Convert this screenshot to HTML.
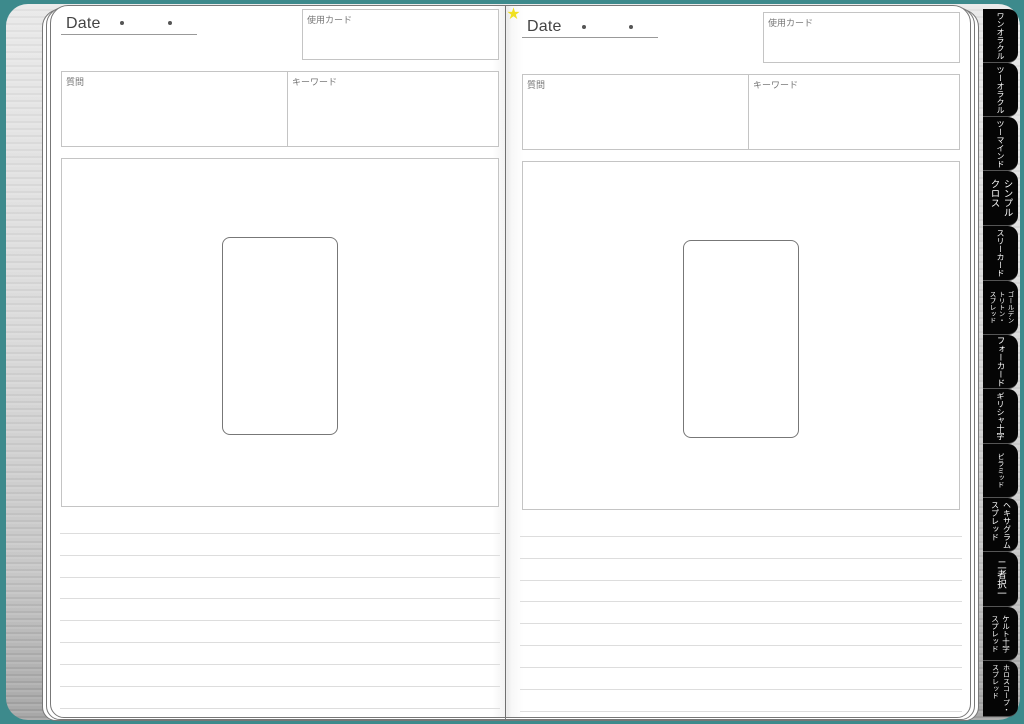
<!DOCTYPE html>
<html><head><meta charset="utf-8">
<style>
*{margin:0;padding:0;box-sizing:border-box}
body{width:1024px;height:724px;overflow:hidden;background:#3d8a8c;position:relative;font-family:"Liberation Sans","Noto Sans CJK JP",sans-serif}
.a{position:absolute}
.cover{left:6px;top:4px;width:1014px;height:716px;border-radius:22px;background:linear-gradient(180deg,#e8e8e8 0%,#d8d8d8 45%,#c2c2c2 80%,#a0a0a0 100%);}
.cover:after{content:"";position:absolute;inset:0;border-radius:22px;background:repeating-linear-gradient(0deg,rgba(255,255,255,.15) 0 2px,rgba(0,0,0,.03) 2px 4px,rgba(255,255,255,.08) 4px 7px)}
.edge{border:1px solid #777;background:#fff}
.box{border:1px solid #c4c4c4;background:#fff}
.lbl{font-size:9px;color:#777;position:absolute;left:4px;top:3px}
.date{font-size:16px;color:#444;letter-spacing:.2px}
.dl{height:1px;background:#999}
.card{border:1.3px solid #777;border-radius:8px;background:#fff}
.ln{height:1px;background:#ddd}
.tab{left:983px;width:35px;background:#050505;border-radius:0 10px 10px 0;color:#fff;writing-mode:vertical-rl;white-space:nowrap;font-size:8px;line-height:11px;display:flex;align-items:center;justify-content:center;border-bottom:1px solid #555}
.dot{width:4px;height:4px;border-radius:50%;background:#555}
</style></head><body>
<div class="a cover"></div>
<div class="a edge" style="left:42px;top:9px;width:470px;height:712px;border-radius:18px 0 0 14px"></div>
<div class="a edge" style="left:46px;top:7px;width:466px;height:713px;border-radius:18px 0 0 14px"></div>
<div class="a edge" style="left:50px;top:5px;width:462px;height:713px;border-radius:18px 0 0 14px"></div>
<div class="a edge" style="left:505px;top:9px;width:474px;height:712px;border-radius:0 18px 14px 0"></div>
<div class="a edge" style="left:505px;top:7px;width:470px;height:713px;border-radius:0 18px 14px 0"></div>
<div class="a edge" style="left:505px;top:5px;width:466px;height:713px;border-radius:0 18px 14px 0"></div>
<div class="a" style="left:492px;top:6px;width:32px;height:711px;background:linear-gradient(90deg,rgba(0,0,0,0) 0%,rgba(0,0,0,.05) 40%,rgba(0,0,0,.08) 50%,rgba(0,0,0,.03) 60%,rgba(0,0,0,0) 100%)"></div>
<div class="a" style="left:507px;top:3px;color:#f0e020;font-size:13px">★</div>

<div class="a date" style="left:66px;top:15px">Date</div>
<div class="a dot" style="left:120px;top:21px"></div>
<div class="a dot" style="left:168px;top:21px"></div>
<div class="a dl" style="left:61px;top:34px;width:136px"></div>
<div class="a box" style="left:302px;top:9px;width:197px;height:51px"><span class="lbl">使用カード</span></div>
<div class="a box" style="left:61px;top:71px;width:227px;height:76px"><span class="lbl">質問</span></div>
<div class="a box" style="left:287px;top:71px;width:212px;height:76px"><span class="lbl">キーワード</span></div>
<div class="a box" style="left:61px;top:158px;width:438px;height:349px"></div>
<div class="a card" style="left:222px;top:237px;width:116px;height:198px"></div>
<div class="a ln" style="left:60px;top:533px;width:440px"></div>
<div class="a ln" style="left:60px;top:555px;width:440px"></div>
<div class="a ln" style="left:60px;top:577px;width:440px"></div>
<div class="a ln" style="left:60px;top:598px;width:440px"></div>
<div class="a ln" style="left:60px;top:620px;width:440px"></div>
<div class="a ln" style="left:60px;top:642px;width:440px"></div>
<div class="a ln" style="left:60px;top:664px;width:440px"></div>
<div class="a ln" style="left:60px;top:686px;width:440px"></div>
<div class="a ln" style="left:60px;top:708px;width:440px"></div>

<div class="a date" style="left:527px;top:18px">Date</div>
<div class="a dot" style="left:582px;top:25px"></div>
<div class="a dot" style="left:629px;top:25px"></div>
<div class="a dl" style="left:522px;top:37px;width:136px"></div>
<div class="a box" style="left:763px;top:12px;width:197px;height:51px"><span class="lbl">使用カード</span></div>
<div class="a box" style="left:522px;top:74px;width:227px;height:76px"><span class="lbl">質問</span></div>
<div class="a box" style="left:748px;top:74px;width:212px;height:76px"><span class="lbl">キーワード</span></div>
<div class="a box" style="left:522px;top:161px;width:438px;height:349px"></div>
<div class="a card" style="left:683px;top:240px;width:116px;height:198px"></div>
<div class="a ln" style="left:520px;top:536px;width:442px"></div>
<div class="a ln" style="left:520px;top:558px;width:442px"></div>
<div class="a ln" style="left:520px;top:580px;width:442px"></div>
<div class="a ln" style="left:520px;top:601px;width:442px"></div>
<div class="a ln" style="left:520px;top:623px;width:442px"></div>
<div class="a ln" style="left:520px;top:645px;width:442px"></div>
<div class="a ln" style="left:520px;top:667px;width:442px"></div>
<div class="a ln" style="left:520px;top:689px;width:442px"></div>
<div class="a ln" style="left:520px;top:711px;width:442px"></div>

<div class="a tab" style="top:9px;height:54px">ワンオラクル</div>
<div class="a tab" style="top:63px;height:54px">ツーオラクル</div>
<div class="a tab" style="top:117px;height:54px">ツーマインド</div>
<div class="a tab" style="top:171px;height:55px;font-size:9.5px;line-height:13px">シンプル<br>クロス</div>
<div class="a tab" style="top:226px;height:55px">スリーカード</div>
<div class="a tab" style="top:281px;height:54px;font-size:6.5px;line-height:9px">ゴールデン<br>トリトン・<br>スプレッド</div>
<div class="a tab" style="top:335px;height:54px;font-size:8.5px">フォーカード</div>
<div class="a tab" style="top:389px;height:55px">ギリシャ十字</div>
<div class="a tab" style="top:444px;height:54px;font-size:7px">ピラミッド</div>
<div class="a tab" style="top:498px;height:54px;font-size:8px;line-height:12px">ヘキサグラム<br>スプレッド</div>
<div class="a tab" style="top:552px;height:55px;font-size:9.5px">二者択一</div>
<div class="a tab" style="top:607px;height:54px;font-size:7.5px;line-height:11px">ケルト十字<br>スプレッド</div>
<div class="a tab" style="top:661px;height:56px;font-size:7px;line-height:11px">ホロスコープ・<br>スプレッド</div>
</body></html>
